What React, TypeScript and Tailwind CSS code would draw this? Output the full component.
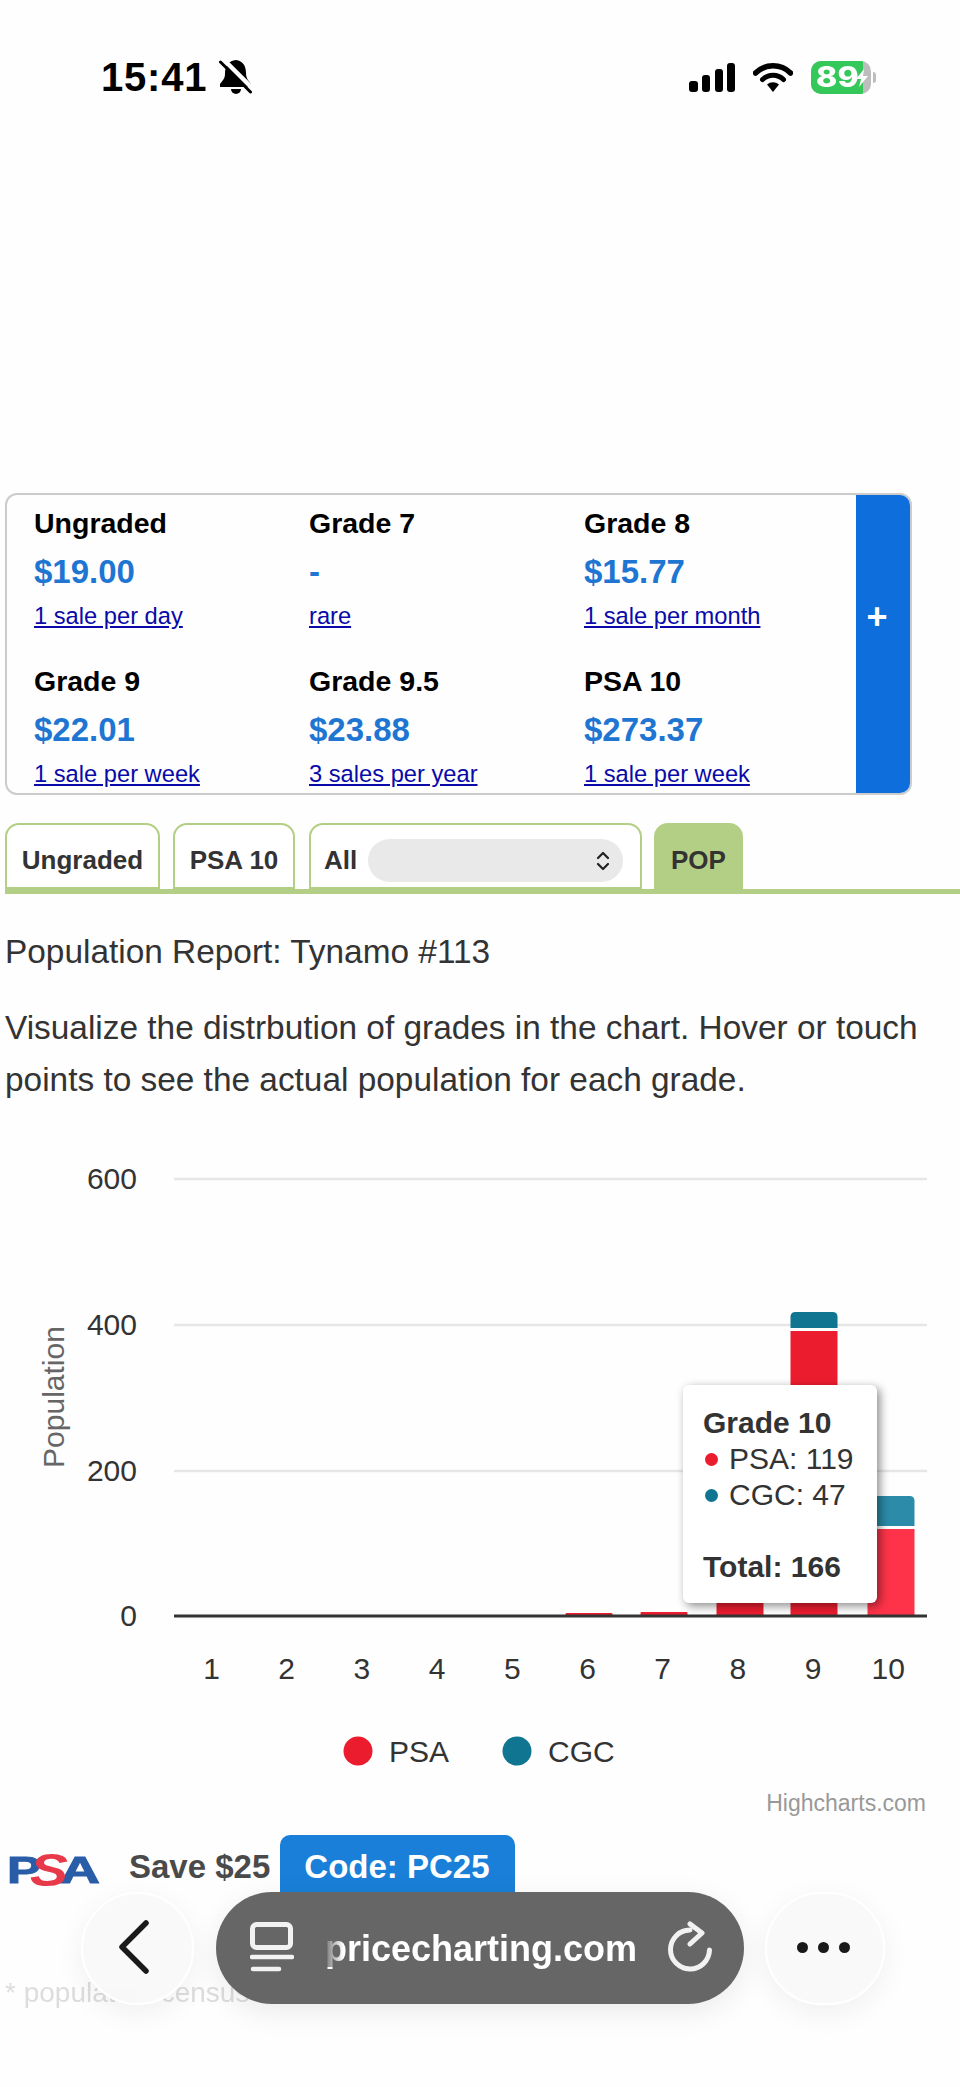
import { ChevronsUpDown } from 'lucide-react'

const PRICES = [
  { label: 'Ungraded', price: '$19.00', sales: '1 sale per day' },
  { label: 'Grade 7', price: '-', sales: 'rare' },
  { label: 'Grade 8', price: '$15.77', sales: '1 sale per month' },
  { label: 'Grade 9', price: '$22.01', sales: '1 sale per week' },
  { label: 'Grade 9.5', price: '$23.88', sales: '3 sales per year' },
  { label: 'PSA 10', price: '$273.37', sales: '1 sale per week' },
]

const GRID = [
  { label: '600', y: 1178 },
  { label: '400', y: 1324 },
  { label: '200', y: 1470 },
]

const AXIS_Y = 1616
const BAR_W = 47

// page coordinates, viewBox of the chart starts at y=1106
const BARS = [
  { grade: 6, cx: 589, psaTop: 1613, cgcTop: 0, hover: false },
  { grade: 7, cx: 664, psaTop: 1612, cgcTop: 0, hover: false },
  { grade: 8, cx: 740, psaTop: 1440, cgcTop: 1425, hover: false },
  { grade: 9, cx: 814, psaTop: 1331, cgcTop: 1312, hover: false },
  { grade: 10, cx: 891, psaTop: 1529, cgcTop: 1496, hover: true },
]

function topRounded(x: number, y: number, w: number, bottom: number, r: number) {
  return `M${x} ${bottom}V${y + r}Q${x} ${y} ${x + r} ${y}H${x + w - r}Q${x + w} ${y} ${x + w} ${y + r}V${bottom}Z`
}

function StatusBar() {
  return (
    <div className="h-[154px] flex items-center pl-[101px]">
      <span className="text-[40px] leading-none font-bold text-black tracking-[0.8px]">15:41</span>
      <svg className="ml-[12px]" width="34" height="36" viewBox="0 0 34 36">
        <path d="M17 1C9 2 6 7 6 15C6 20 3 22 1 25L1 28H32L32 25C30 22 27 20 27 14C27 7 24 2 17 1Z" fill="#000" />
        <path d="M12 30H22A5 5 0 0 1 12 30Z" fill="#000" />
        <path d="M4 0L33 29" stroke="#fff" strokeWidth="4.5" />
        <path d="M1.5 3L31.5 33" stroke="#000" strokeWidth="3" strokeLinecap="round" />
      </svg>
      <div className="ml-auto flex items-center">
        <svg width="46" height="29" viewBox="0 0 46 29">
          <rect x="0" y="18" width="9" height="11" rx="3" fill="#000" />
          <rect x="13" y="12" width="8" height="17" rx="3" fill="#000" />
          <rect x="26" y="6" width="8" height="23" rx="3" fill="#000" />
          <rect x="38" y="0" width="8" height="29" rx="3" fill="#000" />
        </svg>
        <svg className="ml-[18px]" width="40" height="30" viewBox="0 0 40 30">
          <path d="M2.5 11A25 25 0 0 1 37.5 11" fill="none" stroke="#000" strokeWidth="5.5" strokeLinecap="round" />
          <path d="M9.5 17.5A15 15 0 0 1 30.5 17.5" fill="none" stroke="#000" strokeWidth="5" strokeLinecap="round" />
          <path d="M14 22.5A9 9 0 0 1 26 22.5L20 30Z" fill="#000" />
        </svg>
        <div className="ml-[18px] relative w-[60px] h-[33px] rounded-[10px] overflow-hidden bg-[#bdbdbd] flex">
          <div className="w-[52px] bg-[#34c759] flex items-center justify-start pl-[5px]">
            <span className="font-['Inter',sans-serif] text-[28px] leading-none font-extrabold text-white origin-left scale-x-[1.15]">89</span>
          </div>
          <svg className="absolute left-[44px] top-[8px]" width="14" height="18" viewBox="0 0 14 18">
            <path d="M9 0L1 10H6L4 18L13 7H8Z" fill="#fff" />
          </svg>
        </div>
        <div className="ml-[2px] w-[3px] h-[11px] rounded-r-full bg-[#bdbdbd] mr-[84px]" />
      </div>
    </div>
  )
}

function PriceCard() {
  return (
    <div className="mt-[339px] ml-[5px] w-[907px] h-[302px] border-2 border-[#cccccc] rounded-[12px] overflow-hidden flex">
      <div className="flex-1 pl-[27px] grid grid-cols-[275px_275px_1fr] auto-rows-[158px]">
        {PRICES.map(p => (
          <div key={p.label} className="pt-[11px] flex flex-col items-start">
            <div className="text-[28.5px] leading-[34px] font-bold text-black">{p.label}</div>
            <div className="mt-[12px] text-[33px] leading-[40px] font-bold text-[#1f76d2]">{p.price}</div>
            <a className="mt-[10px] text-[23.7px] leading-[28px] underline text-[#0a0aa8]">{p.sales}</a>
          </div>
        ))}
      </div>
      <div className="w-[54px] bg-[#0e6fdc] flex items-center justify-center pr-[12px] pb-[54px]">
        <span className="text-[36px] leading-none font-bold text-white">+</span>
      </div>
    </div>
  )
}

function Tabs() {
  const tabBase = 'h-[66px] border-2 border-[#b3cf85] rounded-t-[14px] flex items-center pt-[9px] text-[26px] font-bold text-[#333333]'
  return (
    <div className="mt-[28px] ml-[5px] flex items-start border-b-[5px] border-[#b3cf85]">
      <div className={`${tabBase} w-[155px] justify-center bg-white`}>Ungraded</div>
      <div className={`${tabBase} ml-[13px] w-[122px] justify-center bg-white`}>PSA 10</div>
      <div className={`${tabBase} ml-[14px] w-[333px] pl-[13px] bg-white`}>
        All
        <div className="ml-[11px] w-[255px] h-[43px] rounded-full bg-[#e9e9e9] flex items-center justify-end pr-[8px]">
          <ChevronsUpDown size={24} strokeWidth={2.2} className="text-[#222222]" />
        </div>
      </div>
      <div className={`${tabBase} ml-[12px] w-[89px] justify-center bg-[#b3cf85]`}>POP</div>
    </div>
  )
}

function Chart() {
  const labels = [1, 2, 3, 4, 5, 6, 7, 8, 9, 10]
  return (
    <div className="relative h-[724px]">
      <svg className="block" width="960" height="724" viewBox="0 1106 960 724">
        {GRID.map(g => (
          <g key={g.label}>
            <line x1="174" x2="927" y1={g.y + 1} y2={g.y + 1} stroke="#e6e6e6" strokeWidth="2.5" />
            <text x="137" y={g.y + 11} textAnchor="end" fontSize="30" fill="#333333">{g.label}</text>
          </g>
        ))}
        <text x="137" y={AXIS_Y + 10} textAnchor="end" fontSize="30" fill="#333333">0</text>
        <text transform="translate(64 1397) rotate(-90)" textAnchor="middle" fontSize="30" fill="#666666">Population</text>

        {BARS.map(b => {
          const x = b.cx - BAR_W / 2
          const red = b.hover ? '#fe3349' : '#ec1c2f'
          const teal = b.hover ? '#2b8ba8' : '#0f7590'
          return (
            <g key={b.grade}>
              {b.cgcTop > 0 && <path d={topRounded(x, b.cgcTop, BAR_W, b.psaTop - 3, 5)} fill={teal} />}
              <rect x={x} y={b.psaTop} width={BAR_W} height={AXIS_Y - b.psaTop} fill={red} rx={b.cgcTop > 0 ? 0 : 1} />
            </g>
          )
        })}

        <line x1="174" x2="927" y1={AXIS_Y} y2={AXIS_Y} stroke="#333333" strokeWidth="3" />

        {labels.map((l, i) => (
          <text key={l} x={211.5 + i * 75.2} y={1679} textAnchor="middle" fontSize="30" fill="#333333">{l}</text>
        ))}

        <circle cx="358" cy="1751" r="14.5" fill="#ec1c2f" />
        <text x="389" y="1762" fontSize="30" fill="#333333">PSA</text>
        <circle cx="517" cy="1751" r="14.5" fill="#0f7590" />
        <text x="548" y="1762" fontSize="30" fill="#333333">CGC</text>

        <text x="926" y="1811" textAnchor="end" fontSize="23" fill="#999999">Highcharts.com</text>
      </svg>

      {/* tooltip */}
      <div className="absolute left-[683px] top-[279px] w-[194px] h-[218px] bg-white rounded-[6px] shadow-[3px_3px_10px_rgba(0,0,0,0.45)] pl-[20px] pt-[20px] text-[#333333] text-[30px] leading-[36px]">
        <div className="font-bold">Grade 10</div>
        <div className="flex items-center">
          <span className="w-[13px] h-[13px] rounded-full bg-[#ec1c2f] ml-[2px] mr-[11px]" />PSA: 119
        </div>
        <div className="flex items-center">
          <span className="w-[13px] h-[13px] rounded-full bg-[#0f7590] ml-[2px] mr-[11px]" />CGC: 47
        </div>
        <div className="font-bold mt-[36px]">Total: 166</div>
      </div>
    </div>
  )
}

function PromoRow() {
  return (
    <div className="flex items-start h-[62px] pl-[6px] pt-[5px]">
      <svg className="blur-[0.6px] mt-[14px] overflow-visible" width="95" height="40" viewBox="0 0 95 40">
        <text x="1" y="34" fontSize="36" fontWeight="700" fill="#2a5da8" stroke="#2a5da8" strokeWidth="1" textLength="34" lengthAdjust="spacingAndGlyphs">P</text>
        <text x="54" y="34" fontSize="36" fontWeight="700" fill="#2a5da8" stroke="#2a5da8" strokeWidth="1" textLength="40" lengthAdjust="spacingAndGlyphs">A</text>
        <text x="24" y="37" fontSize="46" fontWeight="700" fontStyle="italic" fill="#e8394a" textLength="38" lengthAdjust="spacingAndGlyphs">S</text>
      </svg>
      <span className="ml-[28px] mt-[12px] text-[33px] leading-[40px] font-bold text-[#4a4a4a]">Save $25</span>
      <div className="ml-[10px] w-[235px] h-[70px] rounded-t-[10px] bg-[#1a7fd8] pt-[12px] pl-[24px] text-[33px] leading-[40px] font-bold text-white">
        Code: PC25
      </div>
    </div>
  )
}

function BottomNav() {
  return (
    <div className="absolute left-0 right-0 bottom-0 h-[195px]">
      <div className="absolute left-[81px] top-0 w-[113px] h-[113px] rounded-full border-2 border-white bg-[#f8f8f8]/90 backdrop-blur-sm shadow-[0_8px_30px_rgba(0,0,0,0.06)] flex items-center justify-center">
        <svg className="mr-[7px] mb-[3px]" width="32" height="54" viewBox="0 0 32 54">
          <path d="M28 3L4 27L28 51" fill="none" stroke="#1a1a1a" strokeWidth="5.5" strokeLinecap="round" strokeLinejoin="round" />
        </svg>
      </div>

      <div className="absolute left-[216px] top-0 w-[528px] h-[112px] rounded-full bg-[#666666] shadow-[0_8px_30px_rgba(0,0,0,0.08)] flex items-center text-[#f2f2f2]">
        <svg className="ml-[34px]" width="44" height="52" viewBox="0 0 44 52">
          <rect x="2.5" y="2.5" width="38" height="23" rx="4" fill="none" stroke="#f2f2f2" strokeWidth="5" />
          <path d="M2 35H42" stroke="#f2f2f2" strokeWidth="4.5" strokeLinecap="round" />
          <path d="M3 47H29" stroke="#f2f2f2" strokeWidth="4.5" strokeLinecap="round" />
        </svg>
        <span className="relative ml-[31px] mt-[2px] text-[36px] leading-none font-bold text-white">
          pricecharting.com
          <span className="absolute left-[-2px] top-0 bottom-0 w-[20px] bg-gradient-to-r from-[#666666] to-transparent" />
        </span>
        <svg className="ml-[31px]" width="48" height="54" viewBox="0 0 48 54">
          <path d="M22 9A19.5 19.5 0 1 0 41.5 29" fill="none" stroke="#f2f2f2" strokeWidth="5" strokeLinecap="round" />
          <path d="M22 3L34 12L22 23" fill="none" stroke="#f2f2f2" strokeWidth="5" strokeLinecap="round" strokeLinejoin="round" />
        </svg>
      </div>

      <div className="absolute left-[765px] top-0 w-[120px] h-[113px] rounded-full border-2 border-white bg-[#f8f8f8]/90 backdrop-blur-sm shadow-[0_8px_30px_rgba(0,0,0,0.06)] flex items-center justify-center gap-[10px]">
        <span className="w-[11px] h-[11px] rounded-full bg-[#1a1a1a] ml-[-3px] mb-[2px]" />
        <span className="w-[11px] h-[11px] rounded-full bg-[#1a1a1a] mb-[2px]" />
        <span className="w-[11px] h-[11px] rounded-full bg-[#1a1a1a] mb-[2px]" />
      </div>
    </div>
  )
}

export default function App() {
  return (
    <div className="relative w-[960px] h-[2087px] overflow-hidden bg-[#fefefe] font-['Liberation_Sans',Arial,sans-serif]">
      <StatusBar />
      <PriceCard />
      <Tabs />
      <p className="mt-[32px] pl-[5px] text-[33.4px] leading-[52px] text-[#333333]">Population Report: Tynamo #113</p>
      <p className="mt-[24px] pl-[5px] w-[940px] text-[33.4px] leading-[52px] text-[#333333]">
        Visualize the distrbution of grades in the chart. Hover or touch points to see the actual population for each grade.
      </p>
      <Chart />
      <PromoRow />
      <p className="mt-[81px] pl-[5px] text-[28px] leading-[40px] text-[#dddddd] blur-[0.5px]">* population census</p>
      <BottomNav />
    </div>
  )
}
